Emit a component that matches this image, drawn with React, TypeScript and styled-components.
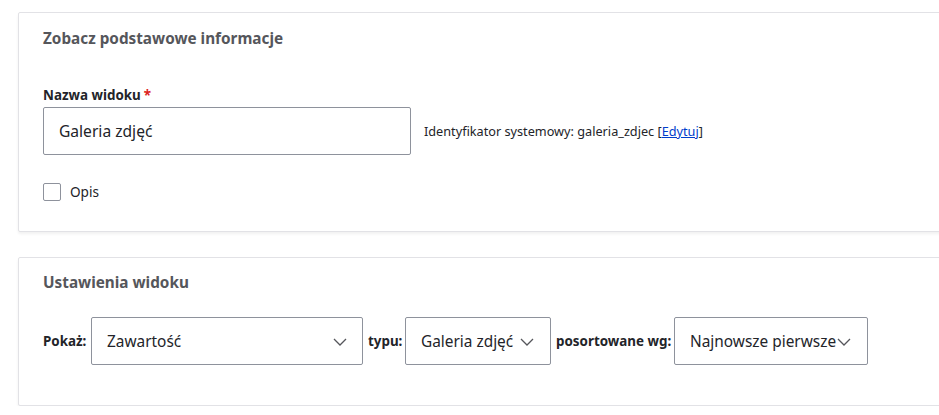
import styled, { createGlobalStyle } from 'styled-components';

const GlobalStyle = createGlobalStyle`
  html, body {
    margin: 0;
    padding: 0;
    background: #ffffff;
    font-family: "Noto Sans", "Open Sans", sans-serif;
    color: #232429;
  }
`;

const Page = styled.div`
  padding: 12px 0 0 18px;
  display: flex;
  flex-direction: column;
  gap: 25px;
  overflow: hidden;
  width: 939px;
  box-sizing: border-box;
`;

const Card = styled.section<{ $pad: string }>`
  width: 960px;
  box-sizing: border-box;
  border: 1px solid #e2e2e6;
  border-radius: 2px;
  box-shadow: 0 2px 3px rgba(0, 0, 0, 0.06);
  background: #fff;
  padding: ${(p) => p.$pad};
`;

const CardTitle = styled.h2`
  margin: 0;
  font-size: 15.3px;
  line-height: 24px;
  font-weight: 700;
  color: #55565b;
`;

const Field = styled.div`
  margin-top: 36px;
`;

const Label = styled.label`
  display: block;
  font-size: 13.4px;
  line-height: 18px;
  font-weight: 700;
  color: #232429;
  margin-bottom: 3px;
`;

const Required = styled.span`
  color: #dc2323;
  margin-left: 3px;
`;

const InputRow = styled.div`
  display: flex;
  align-items: center;
  gap: 13px;
`;

const TextInput = styled.div`
  width: 368px;
  height: 48px;
  box-sizing: border-box;
  border: 1px solid #8e929c;
  border-radius: 2px;
  padding: 0 15px;
  display: flex;
  align-items: center;
  font-size: 15.6px;
  color: #232429;
`;

const Description = styled.span`
  font-size: 12.7px;
  color: #232429;
`;

const Link = styled.a`
  color: #003ecc;
  text-decoration: underline;
`;

const CheckRow = styled.div`
  margin-top: 27px;
  display: flex;
  align-items: center;
  gap: 9px;
`;

const CheckBox = styled.span`
  width: 18px;
  height: 18px;
  box-sizing: border-box;
  border: 1px solid #8e929c;
  border-radius: 2px;
`;

const CheckLabel = styled.span`
  font-size: 13.6px;
  color: #232429;
`;

const SelectRow = styled.div`
  margin-top: 23px;
  display: flex;
  align-items: center;
`;

const InlineLabel = styled.span<{ $w: number; $pl?: number }>`
  width: ${(p) => p.$w}px;
  padding-left: ${(p) => p.$pl ?? 0}px;
  font-size: 13.4px;
  font-weight: 700;
  color: #232429;
  white-space: nowrap;
`;

const Select = styled.div<{ $w: number }>`
  position: relative;
  width: ${(p) => p.$w}px;
  height: 48px;
  box-sizing: border-box;
  border: 1px solid #8e929c;
  border-radius: 2px;
  padding: 0 15px;
  display: flex;
  align-items: center;
  font-size: 15.4px;
  color: #232429;
  white-space: nowrap;
`;

const Chevron = styled.svg<{ $right: number }>`
  position: absolute;
  right: ${(p) => p.$right}px;
  top: 20px;
  width: 14px;
  height: 8px;
`;

const Arrow = ({ right }: { right: number }) => (
  <Chevron $right={right} viewBox="0 0 14 8">
    <polyline
      points="1,1 7,7 13,1"
      fill="none"
      stroke="#55565b"
      strokeWidth="1.3"
    />
  </Chevron>
);

export default function App() {
  return (
    <>
      <GlobalStyle />
      <Page>
        <Card $pad="13px 0 30px 24px">
          <CardTitle>Zobacz podstawowe informacje</CardTitle>
          <Field>
            <Label>
              Nazwa widoku<Required>*</Required>
            </Label>
            <InputRow>
              <TextInput>Galeria zdjęć</TextInput>
              <Description>
                Identyfikator systemowy: galeria_zdjec [<Link href="#">Edytuj</Link>]
              </Description>
            </InputRow>
          </Field>
          <CheckRow>
            <CheckBox />
            <CheckLabel>Opis</CheckLabel>
          </CheckRow>
        </Card>
        <Card $pad="12px 0 40px 24px">
          <CardTitle>Ustawienia widoku</CardTitle>
          <SelectRow>
            <InlineLabel $w={48}>Pokaż:</InlineLabel>
            <Select $w={272}>
              Zawartość
              <Arrow right={15} />
            </Select>
            <InlineLabel $w={37} $pl={5}>
              typu:
            </InlineLabel>
            <Select $w={146}>
              Galeria zdjęć
              <Arrow right={16} />
            </Select>
            <InlineLabel $w={118} $pl={5}>
              posortowane wg:
            </InlineLabel>
            <Select $w={194}>
              Najnowsze pierwsze
              <Arrow right={16} />
            </Select>
          </SelectRow>
        </Card>
      </Page>
    </>
  );
}
